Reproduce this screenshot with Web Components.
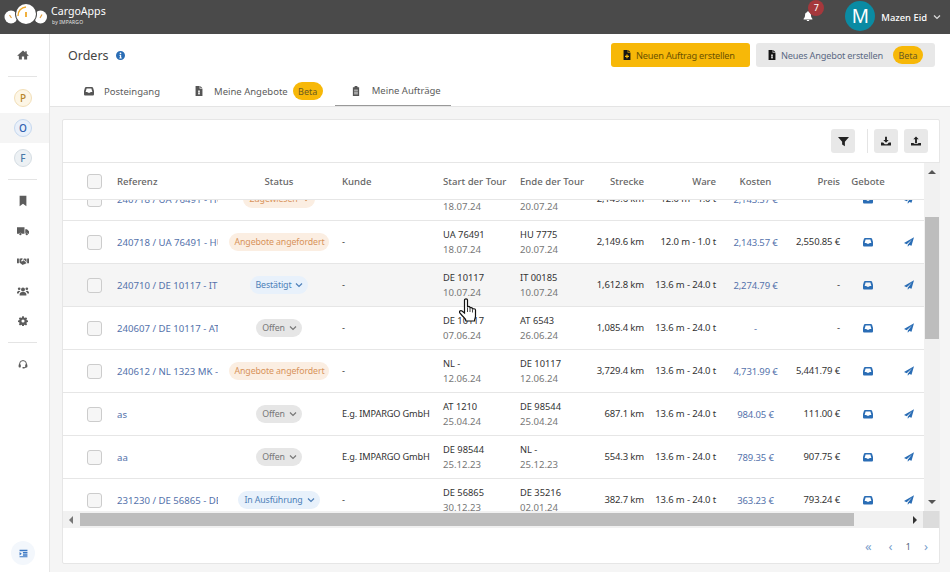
<!DOCTYPE html>
<html>
<head>
<meta charset="utf-8">
<title>Orders</title>
<style>
  html, body { margin: 0; height: 100%; }
  body {
    font-family: "Noto Sans", "Open Sans", sans-serif;
    font-size: 9.6px;
    color: #333;
    background: #f5f5f5;
    width: 950px;
    height: 572px;
    overflow: hidden;
    position: relative;
    --cols: 54px 101px 122px 103px 77px 70px 54px 72px 79px 45px 56px 26px;
  }
  .main { display: flex; height: 538px; }
  .content { flex: 1; display: flex; flex-direction: column; min-width: 0; }
</style>
</head>
<body>
<cargo-topbar></cargo-topbar>
<div class="main">
  <side-nav></side-nav>
  <div class="content">
    <page-head></page-head>
    <order-card></order-card>
  </div>
</div>
<hand-cursor></hand-cursor>

<script>
const ICONS = {
  home: '<path d="M8 2 .5 8.600l.9.9L2.500 8.600V14h4v-4h3v4h4V8.600l1.100.9.9-.9L13 6.400V3h-2v1.600z"/>',
  bookmark: '<path d="M3.500 1h9v14L8 11.800 3.500 15z"/>',
  truck: '<path d="M0 3h10v8.500H6.300a2 2 0 0 0-3.600 0H0zM11 5.500h2.300L16 8.300v3.200h-1.200a2 2 0 0 0-3.600 0H11z"/><circle cx="4.500" cy="12.300" r="1.500"/><circle cx="13" cy="12.300" r="1.500"/>',
  handshake: '<path d="M0 4.500h2.500v6.500H0zM13.500 4.500H16V11h-2.500zM3.300 5 6 4.300l2 .7-2.300 2.300c-.5.800.7 1.700 1.500 1.100L8.800 7l3.900 3.600-.8 1-.9-.3-.3.9-.9-.2-.4.8-1-.2-.8.7L4 10.500l-.7-.5z"/><path d="M9.500 4.500 12.700 5v4.500L9.200 6.100 7.800 6.300z"/>',
  users: '<circle cx="8" cy="6" r="2.600"/><circle cx="2.900" cy="5" r="1.800"/><circle cx="13.100" cy="5" r="1.800"/><path d="M3.500 14v-1.600C3.500 10.500 5 9.200 6.500 9.200h3c1.500 0 3 1.300 3 3.200V14zM0 10.500C0 8.800 1 7.500 2.500 7.500c.9 0 1.500.3 2 .8-1.300.6-2.100 1.600-2.400 3H0zM16 10.500c0-1.700-1-3-2.500-3-.9 0-1.500.3-2 .8 1.300.6 2.100 1.600 2.400 3H16z"/>',
  gear: '<path fill-rule="evenodd" d="M6.700 1h2.600l.4 2 1.300.6 1.800-1.100 1.800 1.800-1.100 1.800.6 1.300 2 .4v2.400l-2 .4-.6 1.300 1.100 1.800-1.800 1.800-1.800-1.100-1.300.6-.4 2H6.700l-.4-2-1.300-.6-1.800 1.100-1.800-1.800 1.100-1.800-.6-1.300-2-.4V7.800l2-.4.6-1.300-1.100-1.800 1.800-1.800L5 3.600l1.300-.6zM8 6a2.500 2.500 0 1 0 0 5 2.500 2.500 0 0 0 0-5z" transform="translate(0 -.5)"/>',
  headset: '<path fill="none" stroke="currentColor" stroke-width="1.600" d="M2.500 10V8a5.500 5.500 0 0 1 11 0v2M13.500 11c0 2-1.500 3-4 3"/><rect x="1" y="8.500" width="3.500" height="5" rx="1.200"/><rect x="11.500" y="8.500" width="3.500" height="5" rx="1.200"/><rect x="7" y="12.800" width="3.500" height="2.200" rx="1"/>',
  listindent: '<path d="M1 1.500h14v2.600H1zM7 5.500h8v2.600H7zM7 9.500h8v2.600H7zM1 13h14v1.800H1zM1 5.500l4 3-4 3z"/>',
  inbox: '<path fill-rule="evenodd" d="M3.500 1.500h9c1 0 1.700.5 2 1.400L16 8v5c0 1.100-.9 2-2 2H2c-1.100 0-2-.9-2-2V8l1.500-5.100c.3-.9 1-1.400 2-1.400zM4.200 3.800 2.600 9.500h2.800l1 1.300h3.200l1-1.300h2.800L11.800 3.800z"/>',
  plane: '<path d="M16 .5 0 9.700l4.300 1.800L13 3.600 6 12.300v3.200l2.500-2.900 3.500 1.500z"/>',
  fileplus: '<path fill-rule="evenodd" d="M2.500 0H9v4.500h4.500V16h-11zM7 7v2.200H4.800v1.800H7v2.200h2V11h2.200V9.200H9V7z"/><path d="M10 0l3.500 3.500H10z"/>',
  filedollar: '<path fill-rule="evenodd" d="M2.500 0H9v4.500h4.500V16h-11zM7.300 6.500v2H6.500v1.500h.8v1H6.500v1.500h.8v1.500h1.400v-1.500h.8V11h-.8v-1h.8V8.500h-.8v-2z"/><path d="M10 0l3.500 3.500H10z"/>',
  filter: '<path d="M0 1.500h16L10 8.500V15L6 12.500v-4z"/>',
  download: '<path d="M6.500 1h3v5.500h2.800L8 10.800 3.700 6.500h2.800zM0 10.500h3.500L6 13h4l2.500-2.500H16V15H0z"/>',
  upload: '<path d="M8 .8l4.300 4.300H9.500v6h-3v-6H3.700zM0 11h4.500v1.500h7V11H16v4H0z"/>',
  clipboard: '<path d="M5.500 2a2.500 2.500 0 0 1 5 0H13v14H3V2zM5 6h6v1.200H5zM5 9h6v1.200H5zM5 12h6v1.200H5z" fill-rule="evenodd"/>',
  bell: '<path d="M8 0c.6 0 1 .4 1 1v.6c2.200.5 3.700 2.300 3.700 4.600 0 3.300 1 4.600 2.300 6V13.500H1v-1.300c1.300-1.400 2.300-2.700 2.300-6C3.300 3.900 4.800 2.100 7 1.600V1c0-.6.4-1 1-1zM6 14.300h4a2 2 0 0 1-4 0z"/>',
  down: '<path d="M2 5l6 6 6-6" fill="none" stroke="currentColor" stroke-width="2.400"/>',
  info: '<path fill-rule="evenodd" d="M8 0a8 8 0 1 0 0 16A8 8 0 0 0 8 0zM8 2.800a1.500 1.500 0 1 1 0 3 1.500 1.500 0 0 1 0-3zM6 7h3.200v4.700h1V13.300H6v-1.600h1V8.600H6z"/>'
}

class AppIcon extends HTMLElement {
  connectedCallback () {
    const size = this.getAttribute('size') || 10
    const body = ICONS[this.getAttribute('name')]
    this.attachShadow({ mode: 'open' }).innerHTML = `
      <style>:host { display: inline-flex; flex: none; line-height: 0; } svg { display: block; }</style>
      <svg width="${size}" height="${size}" viewBox="0 0 16 16" fill="currentColor">${body}</svg>`
  }
}

class BetaPill extends HTMLElement {
  constructor () {
    super()
    this.attachShadow({ mode: 'open' }).innerHTML = `
      <style>
        :host {
          display: inline-flex; align-items: center; justify-content: center; flex: none;
          width: 30px; height: 18px; border-radius: 9px;
          background: #f7b808; color: #6b5a20; font-size: 9px; letter-spacing: 0;
        }
      </style>
      <slot></slot>`
  }
}

class CargoTopbar extends HTMLElement {
  constructor () {
    super()
    this.attachShadow({ mode: 'open' }).innerHTML = `
      <style>
        :host {
          display: flex; align-items: center; height: 34px;
          background: #4a4a4a; color: #fff;
        }
        .logo { margin-left: 3px; }
        .brand { display: flex; flex-direction: column; margin-left: 2px; }
        .brand b { font-weight: 400; font-size: 10.600px; line-height: 13px; margin-top: -4px; }
        .brand small { font-size: 5px; line-height: 8px; opacity: .85; letter-spacing: .15px; margin-left: 1px; }
        .right { margin-left: auto; display: flex; align-items: center; }
        .bell { position: relative; margin-right: 32px; display: flex; top: -1px; }
        .badge {
          position: absolute; left: 5px; top: -11px; width: 16px; height: 16px; border-radius: 50%;
          background: #a5383c; color: #fff; font-size: 9px; line-height: 15px; text-align: center;
        }
        .avatar {
          width: 30px; height: 30px; border-radius: 50%; background: #0a8ba3; margin-top: -2px;
          display: flex; align-items: center; justify-content: center;
          font-size: 19px; margin-right: 6px;
        }
        .name { font-size: 9.400px; font-weight: 500; margin-right: 6px; white-space: nowrap; }
        app-icon { color: #ddd; }
        .chev { margin-right: 9px; }
        .bell app-icon { color: #fff; }
      </style>
      <svg class="logo" width="46" height="26" viewBox="0 0 46 26">
        <circle cx="8" cy="13" r="6.500" fill="#fff"/>
        <circle cx="37.500" cy="13" r="6.500" fill="#fff"/>
        <circle cx="23" cy="10" r="11" fill="#4a4a4a"/>
        <circle cx="23" cy="10" r="10" fill="#fff"/>
        <path d="M15 12A8.500 8.500 0 0 1 23 3" fill="none" stroke="#f0a92a" stroke-width="1.400"/>
        <path d="M23 8v5" stroke="#f0a92a" stroke-width="1.800"/>
        <path d="M6.500 11l2 3M39 10.500l-2 3.500" stroke="#e0a040" stroke-width="1.200"/>
      </svg>
      <div class="brand"><b>CargoApps</b><small>by IMPARGO</small></div>
      <div class="right">
        <div class="bell"><app-icon name="bell" size="10"></app-icon><span class="badge">7</span></div>
        <div class="avatar">M</div>
        <span class="name">Mazen Eid</span>
        <app-icon class="chev" name="down" size="8"></app-icon>
      </div>`
  }
}

class SideNav extends HTMLElement {
  constructor () {
    super()
    this.attachShadow({ mode: 'open' }).innerHTML = `
      <style>
        :host {
          display: flex; flex-direction: column; align-items: stretch;
          width: 49px; flex: none; background: #fff; border-right: 1px solid #e6e6e6;
          color: #5c5c5c;
        }
        .item { height: 30px; display: flex; align-items: center; justify-content: center; padding-right: 3px; }
        .first { height: 42px; }
        .sep { height: 1px; background: #e4e4e4; margin: 0 12px 0 8px; }
        .active { background: #f5f5f5; }
        .letter {
          width: 16px; height: 16px; border-radius: 50%; display: flex; align-items: center; justify-content: center;
          font-size: 10px; font-weight: 500; border: 1px solid;
        }
        .p { background: #fdf6e6; border-color: #f2dfb8; color: #b8862a; }
        .o { background: #e9f0fa; border-color: #c6d8ee; color: #2e5fb0; }
        .f { background: #edf1f4; border-color: #d5dde3; color: #4a78a8; }
        .gap { height: 6px; }
        .spacer { flex: 1; }
        .toggle {
          width: 24px; height: 24px; border-radius: 50%; background: #f3f7fc; color: #3b78c4;
          display: flex; align-items: center; justify-content: center; margin: 0 0 7px 11px;
        }
      </style>
      <div class="item first"><app-icon name="home" size="12"></app-icon></div>
      <div class="sep"></div>
      <div class="gap"></div>
      <div class="item"><span class="letter p">P</span></div>
      <div class="item active"><span class="letter o">O</span></div>
      <div class="item"><span class="letter f">F</span></div>
      <div class="gap"></div>
      <div class="sep"></div>
      <div class="gap"></div>
      <div class="item"><app-icon name="bookmark" size="12"></app-icon></div>
      <div class="item"><app-icon name="truck" size="12"></app-icon></div>
      <div class="item"><app-icon name="handshake" size="12"></app-icon></div>
      <div class="item"><app-icon name="users" size="12"></app-icon></div>
      <div class="item"><app-icon name="gear" size="10"></app-icon></div>
      <div class="gap"></div>
      <div class="sep"></div>
      <div class="gap"></div>
      <div class="item"><app-icon name="headset" size="10"></app-icon></div>
      <div class="spacer"></div>
      <div class="toggle"><app-icon name="listindent" size="9"></app-icon></div>`
  }
}

class PageHead extends HTMLElement {
  constructor () {
    super()
    this.attachShadow({ mode: 'open' }).innerHTML = `
      <style>
        :host {
          display: block; flex: none; background: #fff; border-bottom: 1px solid #e4e4e4;
          padding: 9px 15px 0 18px; height: 63px;
        }
        .top { display: flex; align-items: center; height: 24px; }
        h1 { font-size: 12.500px; font-weight: 400; margin: 0; color: #444; }
        .info { margin-left: 7px; color: #2a6db5; }
        .btn {
          display: flex; align-items: center; height: 24px; border-radius: 3px; white-space: nowrap;
          font-size: 9.200px; letter-spacing: -.2px; box-sizing: border-box;
        }
        .yellow { margin-left: auto; width: 139px; background: #f7b808; color: #6b5200; padding-left: 11px; }
        .grey { margin-left: 6px; width: 179px; background: #e8e8e8; color: #5c6a84; padding: 0 12px 0 11px; }
        .btn app-icon { color: #151515; margin-right: 4px; }
        .grey beta-pill { margin-left: auto; }
        .tabs { display: flex; height: 30px; margin: 9px 0 0 1px; color: #5c5c5c; font-size: 9.500px; }
        .tab { display: flex; align-items: center; padding: 0 15px; box-sizing: border-box; height: 30px; white-space: nowrap; }
        .tab app-icon { margin-right: 10px; color: #555; }
        .tab beta-pill { margin-left: 5px; }
        .t2 { margin-left: 5px; padding: 0 12px 0 14px; }
        .t3 { border-bottom: 1px solid #999; width: 116px; padding-left: 16px; }
        .t3 app-icon { margin-right: 11px; }
      </style>
      <div class="top">
        <h1>Orders</h1>
        <app-icon class="info" name="info" size="9"></app-icon>
        <div class="btn yellow"><app-icon name="fileplus" size="10"></app-icon>Neuen Auftrag erstellen</div>
        <div class="btn grey"><app-icon name="filedollar" size="10"></app-icon>Neues Angebot erstellen<beta-pill>Beta</beta-pill></div>
      </div>
      <div class="tabs">
        <div class="tab"><app-icon name="inbox" size="10"></app-icon>Posteingang</div>
        <div class="tab t2"><app-icon name="filedollar" size="10"></app-icon>Meine Angebote<beta-pill>Beta</beta-pill></div>
        <div class="tab t3"><app-icon name="clipboard" size="10"></app-icon>Meine Aufträge</div>
      </div>`
  }
}

const PILLS = {
  'Zugewiesen': { bg: '#fbeee2', fg: '#d8935a', chev: true },
  'Angebote angefordert': { bg: '#fbeee2', fg: '#d8935a', chev: false },
  'Bestätigt': { bg: '#e8f1fb', fg: '#4d7fb8', chev: true },
  'Offen': { bg: '#e6e6e6', fg: '#777', chev: true },
  'In Ausführung': { bg: '#e8f1fb', fg: '#4d7fb8', chev: true }
}

class StatusPill extends HTMLElement {
  connectedCallback () {
    const p = PILLS[this.textContent.trim()]
    this.attachShadow({ mode: 'open' }).innerHTML = `
      <style>
        :host {
          display: inline-flex; align-items: center; gap: 4px; height: 18px; padding: 0 5px 0 6px;
          border-radius: 9px; background: ${p.bg}; color: ${p.fg}; font-size: 8.800px; letter-spacing: -.12px; white-space: nowrap;
        }
      </style>
      <slot></slot>${p.chev ? '<app-icon name="down" size="8"></app-icon>' : ''}`
  }
}

class OrderRow extends HTMLElement {
  connectedCallback () {
    const d = JSON.parse(this.getAttribute('data'))
    this.attachShadow({ mode: 'open' }).innerHTML = `
      <style>
        :host {
          display: grid; grid-template-columns: var(--cols); align-items: center;
          height: 43px; box-sizing: border-box; border-bottom: 1px solid #e6e6e6; background: #fff;
          color: #333;
        }
        :host([hover]) { background: #f5f5f5; }
        .check {
          width: 15px; height: 15px; box-sizing: border-box; margin-left: 24px;
          border: 1px solid #ccc; border-radius: 3px; background: #f6f6f6;
        }
        .ref { color: #5472ab; overflow: hidden; white-space: nowrap; }
        .status { text-align: center; line-height: 0; }
        .kunde { padding-left: 2px; white-space: nowrap; margin-top: -2px; font-size: 9.200px; letter-spacing: -.15px; }
        .two { line-height: 15px; white-space: nowrap; font-size: 9.300px; }
        .two span { color: #777; display: block; font-size: 9.600px; }
        .r { text-align: right; white-space: nowrap; margin-top: -2px; font-size: 9.500px; letter-spacing: -.15px; }
        .cost { text-align: center; color: #5472ab; white-space: nowrap; font-size: 9.500px; letter-spacing: -.15px; }
        .ico { display: flex; justify-content: center; color: #2a6db5; }
      </style>
      <div class="check"></div>
      <div class="ref">${d.ref}</div>
      <div class="status"><status-pill>${d.status}</status-pill></div>
      <div class="kunde">${d.kunde}</div>
      <div class="two">${d.from}<span>${d.fromDate}</span></div>
      <div class="two">${d.to}<span>${d.toDate}</span></div>
      <div class="r">${d.dist}</div>
      <div class="r">${d.ware}</div>
      <div class="cost">${d.cost}</div>
      <div class="r">${d.price}</div>
      <div class="ico"><app-icon name="inbox" size="10"></app-icon></div>
      <div class="ico"><app-icon name="plane" size="10"></app-icon></div>`
  }
}

const ORDERS = [
  { ref: '240718 / UA 76491 - HU 7775', status: 'Zugewiesen', kunde: '', from: 'UA 76491', fromDate: '18.07.24', to: 'HU 7775', toDate: '20.07.24', dist: '2,149.6 km', ware: '12.0 m - 1.0 t', cost: '2,143.57 €', price: '' },
  { ref: '240718 / UA 76491 - HU 7775', status: 'Angebote angefordert', kunde: '-', from: 'UA 76491', fromDate: '18.07.24', to: 'HU 7775', toDate: '20.07.24', dist: '2,149.6 km', ware: '12.0 m - 1.0 t', cost: '2,143.57 €', price: '2,550.85 €' },
  { ref: '240710 / DE 10117 - IT 00185', status: 'Bestätigt', kunde: '-', from: 'DE 10117', fromDate: '10.07.24', to: 'IT 00185', toDate: '10.07.24', dist: '1,612.8 km', ware: '13.6 m - 24.0 t', cost: '2,274.79 €', price: '-', hover: true },
  { ref: '240607 / DE 10117 - AT 6543', status: 'Offen', kunde: '-', from: 'DE 10117', fromDate: '07.06.24', to: 'AT 6543', toDate: '26.06.24', dist: '1,085.4 km', ware: '13.6 m - 24.0 t', cost: '-', price: '-' },
  { ref: '240612 / NL 1323 MK - DE 10117', status: 'Angebote angefordert', kunde: '-', from: 'NL -', fromDate: '12.06.24', to: 'DE 10117', toDate: '12.06.24', dist: '3,729.4 km', ware: '13.6 m - 24.0 t', cost: '4,731.99 €', price: '5,441.79 €' },
  { ref: 'as', status: 'Offen', kunde: 'E.g. IMPARGO GmbH', from: 'AT 1210', fromDate: '25.04.24', to: 'DE 98544', toDate: '25.04.24', dist: '687.1 km', ware: '13.6 m - 24.0 t', cost: '984.05 €', price: '111.00 €' },
  { ref: 'aa', status: 'Offen', kunde: 'E.g. IMPARGO GmbH', from: 'DE 98544', fromDate: '25.12.23', to: 'NL -', toDate: '25.12.23', dist: '554.3 km', ware: '13.6 m - 24.0 t', cost: '789.35 €', price: '907.75 €' },
  { ref: '231230 / DE 56865 - DE 35216', status: 'In Ausführung', kunde: '-', from: 'DE 56865', fromDate: '30.12.23', to: 'DE 35216', toDate: '02.01.24', dist: '382.7 km', ware: '13.6 m - 24.0 t', cost: '363.23 €', price: '793.24 €' }
]

class OrderCard extends HTMLElement {
  constructor () {
    super()
    this.attachShadow({ mode: 'open' }).innerHTML = `
      <style>
        :host {
          display: flex; flex-direction: column; box-sizing: border-box;
          width: 878px; height: 445px; margin: 12px 0 0 12px;
          background: #fff; border: 1px solid #e6e6e6; border-radius: 2px;
        }
        .toolbar {
          display: flex; align-items: center; justify-content: flex-end; flex: none; height: 42px;
          border-bottom: 1px solid #e6e6e6; padding-right: 11px; gap: 6px;
        }
        .tb {
          width: 24px; height: 24px; border-radius: 3px; background: #e8e8e8; color: #222;
          display: flex; align-items: center; justify-content: center;
        }
        .vsep { width: 1px; height: 24px; background: #e4e4e4; margin: 0 0 0 6px; }
        .middle { display: flex; height: 348px; flex: none; }
        .view { width: 861px; flex: none; display: flex; flex-direction: column; overflow: hidden; }
        .head {
          display: grid; grid-template-columns: var(--cols); align-items: center; flex: none;
          height: 37px; box-sizing: border-box; border-bottom: 1px solid #e6e6e6;
          color: #666; font-weight: 500; white-space: nowrap; background: #fff; position: relative; z-index: 1;
        }
        .check {
          width: 15px; height: 15px; box-sizing: border-box; margin-left: 24px;
          border: 1px solid #ccc; border-radius: 3px; background: #f6f6f6;
        }
        .c { text-align: center; }
        .r { text-align: right; }
        .k { padding-left: 2px; }
        .rows { flex: 1; overflow: hidden; }
        .rows-inner { margin-top: -22px; }
        .vbar {
          width: 16px; flex: none; background: #f1f1f1; display: flex; flex-direction: column;
          align-items: center;
        }
        .thumb-v { width: 14px; height: 122px; background: #bdbdbd; margin-top: 43px; }
        .arrow { width: 0; height: 0; border: 4px solid transparent; }
        .up { border-bottom: 4px solid #555; border-top: 0; margin-top: 7px; }
        .dn { border-top: 4px solid #555; border-bottom: 0; margin-top: auto; margin-bottom: 7px; }
        .hbar { display: flex; align-items: center; flex: none; height: 17px; background: #f1f1f1; }
        .thumb-h { width: 774px; height: 13px; background: #bdbdbd; margin-left: 7px; }
        .lf { border-right: 4px solid #777; border-left: 0; margin-left: 6px; }
        .rg { border-left: 4px solid #333; border-right: 0; margin-left: 59px; }
        .corner { width: 16px; height: 17px; background: #dcdcdc; margin-left: auto; }
        .pager {
          flex: 1; display: flex; align-items: center; justify-content: flex-end;
          color: #7aa0cc; font-size: 13px; padding-right: 11px;
        }
        .pager .one { color: #5c6a84; font-size: 9.500px; margin: 2px 13px 0; }
        .pager .dbl { margin-right: 17px; }
      </style>
      <div class="toolbar">
        <div class="tb"><app-icon name="filter" size="11"></app-icon></div>
        <div class="vsep"></div>
        <div class="tb"><app-icon name="download" size="10"></app-icon></div>
        <div class="tb"><app-icon name="upload" size="10"></app-icon></div>
      </div>
      <div class="middle">
        <div class="view">
          <div class="head">
            <div class="check"></div>
            <div>Referenz</div>
            <div class="c">Status</div>
            <div class="k">Kunde</div>
            <div>Start der Tour</div>
            <div>Ende der Tour</div>
            <div class="r">Strecke</div>
            <div class="r">Ware</div>
            <div class="c">Kosten</div>
            <div class="r">Preis</div>
            <div class="c">Gebote</div>
            <div></div>
          </div>
          <div class="rows"><div class="rows-inner"></div></div>
        </div>
        <div class="vbar">
          <div class="arrow up"></div>
          <div class="thumb-v"></div>
          <div class="arrow dn"></div>
        </div>
      </div>
      <div class="hbar">
        <div class="arrow lf"></div>
        <div class="thumb-h"></div>
        <div class="arrow rg"></div>
        <div class="corner"></div>
      </div>
      <div class="pager">
        <span class="dbl">«</span><span>‹</span><span class="one">1</span><span>›</span>
      </div>`
    const list = this.shadowRoot.querySelector('.rows-inner')
    ORDERS.forEach((o) => {
      const row = document.createElement('order-row')
      row.setAttribute('data', JSON.stringify(o))
      if (o.hover) row.setAttribute('hover', '')
      list.append(row)
    })
  }
}

class HandCursor extends HTMLElement {
  constructor () {
    super()
    this.attachShadow({ mode: 'open' }).innerHTML = `
      <style>:host { position: absolute; left: 459px; top: 298px; width: 18px; height: 24px; }</style>
      <svg width="18" height="24" viewBox="0 0 18 24">
        <path d="M5.500 2C5.500.5 8.500.5 8.500 2V9.500C8.500 8 11 8 11 9.500V10.500C11 9.200 13.500 9.200 13.500 10.800V11.500C13.500 10.400 16.500 10.400 16.500 12V18C16.500 20 15.500 21 15.500 23H7C7 21 5 19.500 3.500 18L.8 15C-.2 13.500 1.500 12 3 13L5.500 15Z" fill="#fff" stroke="#111" stroke-width="1.200"/>
        <path d="M8.500 10v4M11 10.500v3.500M13.500 11.500v3" stroke="#111" stroke-width=".8" fill="none"/>
      </svg>`
  }
}

customElements.define('app-icon', AppIcon)
customElements.define('beta-pill', BetaPill)
customElements.define('status-pill', StatusPill)
customElements.define('order-row', OrderRow)
customElements.define('cargo-topbar', CargoTopbar)
customElements.define('side-nav', SideNav)
customElements.define('page-head', PageHead)
customElements.define('order-card', OrderCard)
customElements.define('hand-cursor', HandCursor)
</script>
</body>
</html>
